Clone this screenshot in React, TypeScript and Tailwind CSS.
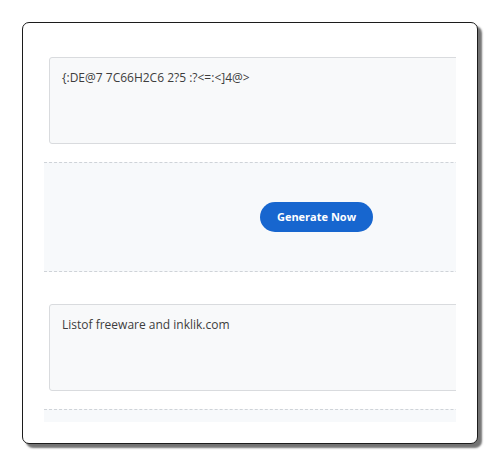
import React from 'react';

const font = { fontFamily: '"Open Sans", "Liberation Sans", sans-serif' };

const Box: React.FC<{ text: string }> = ({ text }) => (
  <div className="mx-[5px] h-[87px] w-[533px] shrink-0 rounded-[3px] border border-[#d9dbde] bg-[#f8f9fa] px-3 py-[12px] text-[12px] leading-4 text-[#3d3d3d]">
    {text}
  </div>
);

export default function App() {
  return (
    <div className="bg-white p-[22px]" style={font}>
      <div className="h-[422px] rounded-[7px] border border-[#1c1c1c] bg-white p-[21px] shadow-[4px_4px_2px_rgba(0,0,0,0.55)]">
        <div className="h-[378px] overflow-hidden">
          <div className="flex w-[545px] flex-col pt-[13px]">
            <Box text="{:DE@7 7C66H2C6 2?5 :?<=:<]4@>" />
            <div className="mt-[18px] flex h-[110px] items-center justify-center border-y border-dashed border-[#cfd3d8] bg-[#f7f9fb]">
              <button className="h-[30px] w-[113px] rounded-full bg-[#1766cf] text-[11px] font-bold text-white">
                Generate Now
              </button>
            </div>
            <div className="mt-[32px]">
              <Box text="Listof freeware and inklik.com" />
            </div>
            <div className="mt-[18px] h-[40px] border-t border-dashed border-[#cfd3d8] bg-[#f7f9fb]" />
          </div>
        </div>
      </div>
    </div>
  );
}
